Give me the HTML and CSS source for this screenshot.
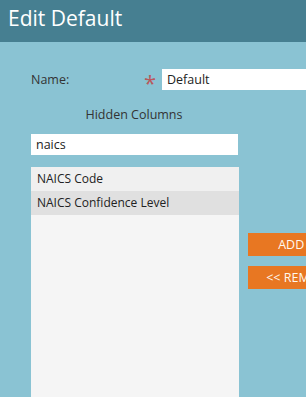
FILE: index.html
```html
<!DOCTYPE html>
<html lang="en">
<head>
    <meta charset="utf-8">
    <title>Edit Default</title>
    <link rel="stylesheet" href="styles.css">
</head>
<body>
    <div class="header">Edit Default</div>
    <div class="content">
        <div class="name-row">
            <label class="name-label" for="name">Name:</label>
            <span class="required">*</span>
            <input id="name" class="name-input" value="Default">
        </div>
        <div class="columns">
            <div class="column">
                <div class="column-title">Hidden Columns</div>
                <input class="search" value="naics">
                <div class="list">
                    <div class="item">NAICS Code</div>
                    <div class="item selected">NAICS Confidence Level</div>
                </div>
            </div>
            <div class="actions">
                <button class="btn">ADD &gt;&gt;</button>
                <button class="btn">&lt;&lt; REMOVE</button>
            </div>
        </div>
    </div>
</body>
</html>
```

FILE: styles.css
```css
body {
    margin: 0;
    font-family: "Open Sans", sans-serif;
    background: #8ac3d3;
    color: #333;
    overflow: hidden;
}
.header {
    height: 42px;
    box-sizing: border-box;
    background: #467f91;
    color: #fff;
    font-size: 21px;
    line-height: 36px;
    padding-left: 8px;
}
.content {
    padding: 27px 0 0 31px;
}
.name-row {
    display: flex;
    align-items: center;
    height: 21px;
}
.name-label {
    flex: 0 0 113px;
    font-size: 12.5px;
}
.required {
    flex: 0 0 18px;
    color: #b9585c;
    font-size: 22px;
    line-height: 21px;
    padding-top: 5px;
}
.name-input {
    flex: 0 0 160px;
    height: 21px;
    box-sizing: border-box;
    border: 0;
    padding: 0 5px;
    font-family: inherit;
    font-size: 12.5px;
    color: #222;
    background: #fff;
}
.columns {
    display: flex;
    margin-top: 13px;
}
.column {
    flex: 0 0 208px;
}
.column-title {
    font-size: 12.5px;
    text-align: center;
    line-height: 24px;
    margin-bottom: 7px;
    padding-right: 2px;
}
.search {
    display: block;
    width: 207px;
    height: 21px;
    box-sizing: border-box;
    border: 0;
    padding: 0 5px;
    font-family: inherit;
    font-size: 12.5px;
    color: #222;
    background: #fff;
}
.list {
    margin-top: 12px;
    height: 240px;
    background: #f5f5f5;
}
.item {
    height: 24px;
    line-height: 24px;
    font-size: 12px;
    padding-left: 6px;
    color: #222;
    background: #f0f0f0;
}
.item.selected {
    background: #e0e0e0;
}
.actions {
    display: flex;
    flex-direction: column;
    gap: 10px;
    margin-left: 9px;
    padding-top: 130px;
}
.btn {
    width: 104px;
    height: 23px;
    border: 0;
    background: #e87722;
    color: #fff8ee;
    font-family: inherit;
    font-size: 12.5px;
    padding: 0;
    text-align: center;
    white-space: nowrap;
}
```
